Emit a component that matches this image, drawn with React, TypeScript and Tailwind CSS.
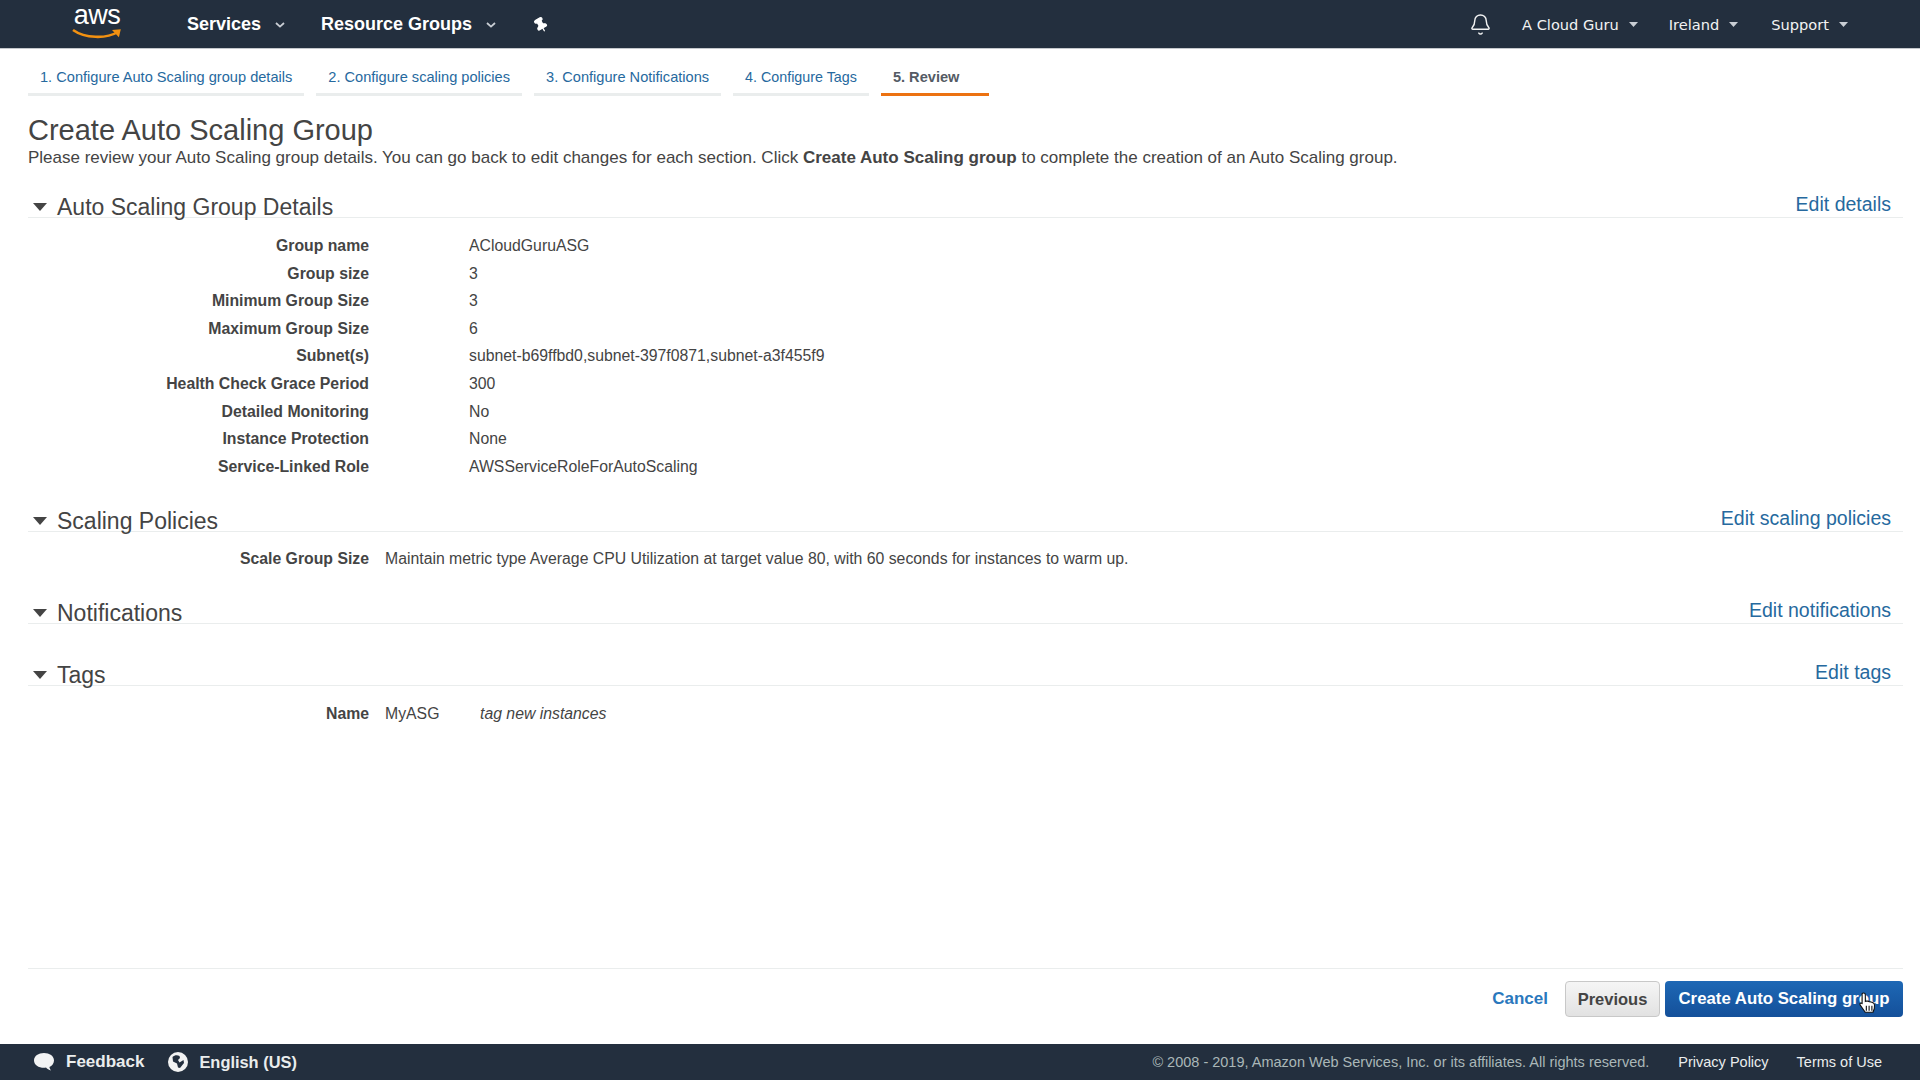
import React from "react";
import { Bell, Pin } from "lucide-react";

const SANS = "font-['Liberation_Sans',Arial,sans-serif]";

function Chevron({ className = "" }: { className?: string }) {
  return (
    <svg width="10" height="6" viewBox="0 0 10 6" className={className}>
      <path d="M1 1l4 3.6L9 1" fill="none" stroke="#c9ced4" strokeWidth="1.8" />
    </svg>
  );
}

function Caret() {
  return (
    <svg width="9" height="5" viewBox="0 0 9 5" className="ml-[10px]">
      <path d="M0 0h9L4.500 5z" fill="#c9ced4" />
    </svg>
  );
}

function SectionHead({ title, link }: { title: string; link: string }) {
  return (
    <div className="flex h-[23px] items-end justify-between border-b border-[#eaeded] pr-3">
      <div className="flex items-center">
        <svg width="14" height="8" viewBox="0 0 14 8" className="ml-[5px] mr-[10px]">
          <path d="M0 0h14L7 8z" fill="#444" />
        </svg>
        <span className="text-[23px] leading-[20px] text-[#444]">{title}</span>
      </div>
      <a className="mb-[2px] text-[19.500px] leading-[22px] text-[#26699e]">{link}</a>
    </div>
  );
}

const details: [string, string][] = [
  ["Group name", "ACloudGuruASG"],
  ["Group size", "3"],
  ["Minimum Group Size", "3"],
  ["Maximum Group Size", "6"],
  ["Subnet(s)", "subnet-b69ffbd0,subnet-397f0871,subnet-a3f455f9"],
  ["Health Check Grace Period", "300"],
  ["Detailed Monitoring", "No"],
  ["Instance Protection", "None"],
  ["Service-Linked Role", "AWSServiceRoleForAutoScaling"],
];

const tabs = [
  "1. Configure Auto Scaling group details",
  "2. Configure scaling policies",
  "3. Configure Notifications",
];

export default function App() {
  return (
    <div className={`flex h-screen w-[1920px] flex-col overflow-hidden bg-white ${SANS} text-[#444]`}>
      <header className="flex h-[49px] shrink-0 items-center border-b border-[#c4c8cc] bg-[#232f3e] pt-[1px] text-white">
        <div className="relative ml-[72px] mt-[-1px] h-[44px] w-[50px] self-start">
          <span className="block text-center text-[27px] leading-[31px] tracking-[-0.500px] text-white">aws</span>
          <svg width="50" height="12" viewBox="0 0 50 12" className="absolute left-0 top-[28px]">
            <path d="M1 2C13 10.500 34 11 46 4" fill="none" stroke="#f29111" strokeWidth="2.600" />
            <path d="M40 2l8.800-.8-1.900 8z" fill="#f29111" />
          </svg>
        </div>
        <div className="ml-[65px] flex items-center text-[18px] font-bold">
          Services
          <Chevron className="ml-[14px]" />
        </div>
        <div className="ml-[36px] flex items-center text-[18px] font-bold">
          Resource Groups
          <Chevron className="ml-[14px]" />
        </div>
        <Pin size={16} fill="white" className="ml-[37px] -rotate-30" />
        <div className="ml-auto flex items-center font-['DejaVu_Sans',sans-serif] text-[14.600px] text-[#f2f3f3]">
          <Bell size={23} strokeWidth={1.500} className="mr-[30px]" />
          <span className="flex items-center">A Cloud Guru<Caret /></span>
          <span className="ml-[31px] flex items-center">Ireland<Caret /></span>
          <span className="ml-[33px] mr-[72px] flex items-center">Support<Caret /></span>
        </div>
      </header>

      <main className="flex flex-1 flex-col pl-[28px] pr-[17px]">
        <nav className="mt-[12px] flex gap-3 text-[14.600px] leading-[32px]">
          {tabs.map((t) => (
            <a key={t} className="border-b-[3px] border-[#eaeded] px-3 text-[#26699e]">{t}</a>
          ))}
          <a className="border-b-[3px] border-[#eaeded] px-3 text-[14.300px] text-[#26699e]">4. Configure Tags</a>
          <a className="w-[108px] border-b-[3px] border-[#ec7211] px-3 font-bold text-[#545b64]">5. Review</a>
        </nav>

        <h1 className="mt-[16px] text-[29px] leading-[36px] text-[#444]">Create Auto Scaling Group</h1>
        <p className="text-[17px] leading-[20px] text-[#444]">
          Please review your Auto Scaling group details. You can go back to edit changes for each section. Click{" "}
          <b>Create Auto Scaling group</b> to complete the creation of an Auto Scaling group.
        </p>

        <section className="mt-[27px]">
          <SectionHead title="Auto Scaling Group Details" link="Edit details" />
          <dl className="mt-[14px] text-[15.800px] leading-[27.600px]">
            {details.map(([k, v]) => (
              <div key={k} className="flex">
                <dt className="w-[341px] text-right font-bold">{k}</dt>
                <dd className="ml-[100px]">{v}</dd>
              </div>
            ))}
          </dl>
        </section>

        <section className="mt-[29px]">
          <SectionHead title="Scaling Policies" link="Edit scaling policies" />
          <div className="mt-[13px] flex text-[15.800px] leading-[27.600px]">
            <span className="w-[341px] text-right font-bold">Scale Group Size</span>
            <span className="ml-[16px]">Maintain metric type Average CPU Utilization at target value 80, with 60 seconds for instances to warm up.</span>
          </div>
        </section>

        <section className="mt-[28px]">
          <SectionHead title="Notifications" link="Edit notifications" />
        </section>

        <section className="mt-[39px]">
          <SectionHead title="Tags" link="Edit tags" />
          <div className="mt-[14px] flex text-[15.800px] leading-[27.600px]">
            <span className="w-[341px] text-right font-bold">Name</span>
            <span className="ml-[16px] w-[95px]">MyASG</span>
            <span className="italic">tag new instances</span>
          </div>
        </section>

        <div className="mt-auto flex h-[76px] items-start justify-end border-t border-[#eaeded] pt-[12px]">
          <a className="mr-[17px] text-[17px] leading-[36px] font-bold text-[#2a78bd]">Cancel</a>
          <button className="mr-[5px] h-[36px] w-[95px] rounded-[4px] border border-[#c8c8c8] bg-gradient-to-b from-[#f5f5f5] to-[#e2e2e2] text-[16.500px] font-bold text-[#444]">Previous</button>
          <div className="relative">
            <button className="h-[36px] w-[238px] rounded-[4px] bg-gradient-to-b from-[#1e68b5] to-[#14509a] text-[16.800px] font-bold text-white">Create Auto Scaling group</button>
            <svg width="20" height="25" viewBox="0 0 18 22" className="absolute left-[193px] top-[10px]">
              <path d="M5 1.500c1 0 1.600.7 1.600 1.600v6l1-.3 1.300.1 1.200.4 1.600.3 1.400.5 1.400 1c.5 1 .4 3 .2 4.400l-1.200 3.400H6.500L2 12.500c-.6-1-.2-1.900.7-2 .7 0 1.100.4 1 1V3.100C3.500 2.200 4 1.500 5 1.500z" fill="#fff" stroke="#111" strokeWidth="1" />
              <path d="M7.500 13v4.500M10 13v4.500M12.500 13v4.500" stroke="#111" strokeWidth="1" />
            </svg>
          </div>
        </div>
      </main>

      <footer className="flex h-[36px] shrink-0 items-center bg-[#232f3e] text-[#eaeded]">
        <svg width="22" height="20" viewBox="0 0 22 20" className="ml-[33px]">
          <path d="M11 1c5.500 0 10 3 10 7.400 0 3-2 5.300-4.600 6.500.2 1.400.9 2.600 1.600 3.600-2-.4-3.900-1.600-5-3-.7.1-1.300.2-2 .2-5.500 0-10-2.900-10-7.300S5.500 1 11 1z" fill="#f2f3f3" />
        </svg>
        <span className="ml-[11px] text-[17px] font-bold">Feedback</span>
        <svg width="20" height="20" viewBox="0 0 20 20" className="ml-[24px]">
          <circle cx="10" cy="10" r="10" fill="#f2f3f3" />
          <path d="M4.500 5c2-2 5-2 7-1l.5 2-2 2 1.500 2.500 4-2.500.5 3-4 5-2-.5-1-4L5 9.500z" fill="#232f3e" />
        </svg>
        <span className="ml-[11px] text-[16.400px] font-bold">English (US)</span>
        <div className="ml-auto flex items-center pt-[1px] text-[14.500px]">
          <span className="text-[#aab7b8]">© 2008 - 2019, Amazon Web Services, Inc. or its affiliates. All rights reserved.</span>
          <a className="ml-[29px]">Privacy Policy</a>
          <a className="ml-[28px] mr-[38px]">Terms of Use</a>
        </div>
      </footer>
    </div>
  );
}
